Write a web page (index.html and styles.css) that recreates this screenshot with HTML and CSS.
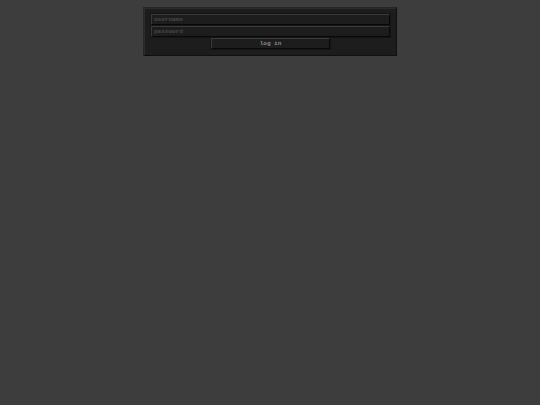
FILE: index.html
```html
<!DOCTYPE html>
<html lang="en">
<head>
    <meta charset="UTF-8">
    <meta name="viewport" content="width=device-width, initial-scale=1.0">
    <title>Log in</title>
    <link rel="stylesheet" href="styles.css">
</head>
<body>
    <form class="login" method="post">
        <input type="text" name="username" placeholder="username" aria-label="username">
        <input type="password" name="password" placeholder="password" aria-label="password">
        <button type="submit">log in</button>
    </form>
</body>
</html>
```
FILE: styles.css
```css
* {
    box-sizing: border-box;
}

body {
    margin: 0;
    padding: 7px;
    background-color: #3d3d3d;
    font-family: "Liberation Mono", monospace;
}

/* Login panel */
.login {
    display: flex;
    flex-direction: column;
    gap: 1px;
    width: 100%;
    max-width: 254px;
    margin: 0 auto;
    padding: 6px 6px 6px 7px;
    background-color: #1d1d1d;
    border: 1px solid;
    border-color: #262626 #101010 #101010 #262626;
    box-shadow: inset 1px 1px #2c2c2c;
}

input, button {
    margin: 0;
    background-color: #1d1d1d;
    border: 1px solid;
    border-color: #3a3a3a #080808 #080808 #3a3a3a;
    border-radius: 0;
    box-shadow: 0 0 0 1px #151515;
    font-family: inherit;
    font-size: 6px;
    font-weight: bold;
    line-height: 7px;
}

input {
    width: 100%;
    height: 11px;
    padding: 1px 2px;
    color: #999;
}

input::placeholder {
    color: #484848;
}

button {
    width: 50%;
    height: 11px;
    margin: 0 auto;
    padding: 1px;
    color: #8c8c8c;
}
```
